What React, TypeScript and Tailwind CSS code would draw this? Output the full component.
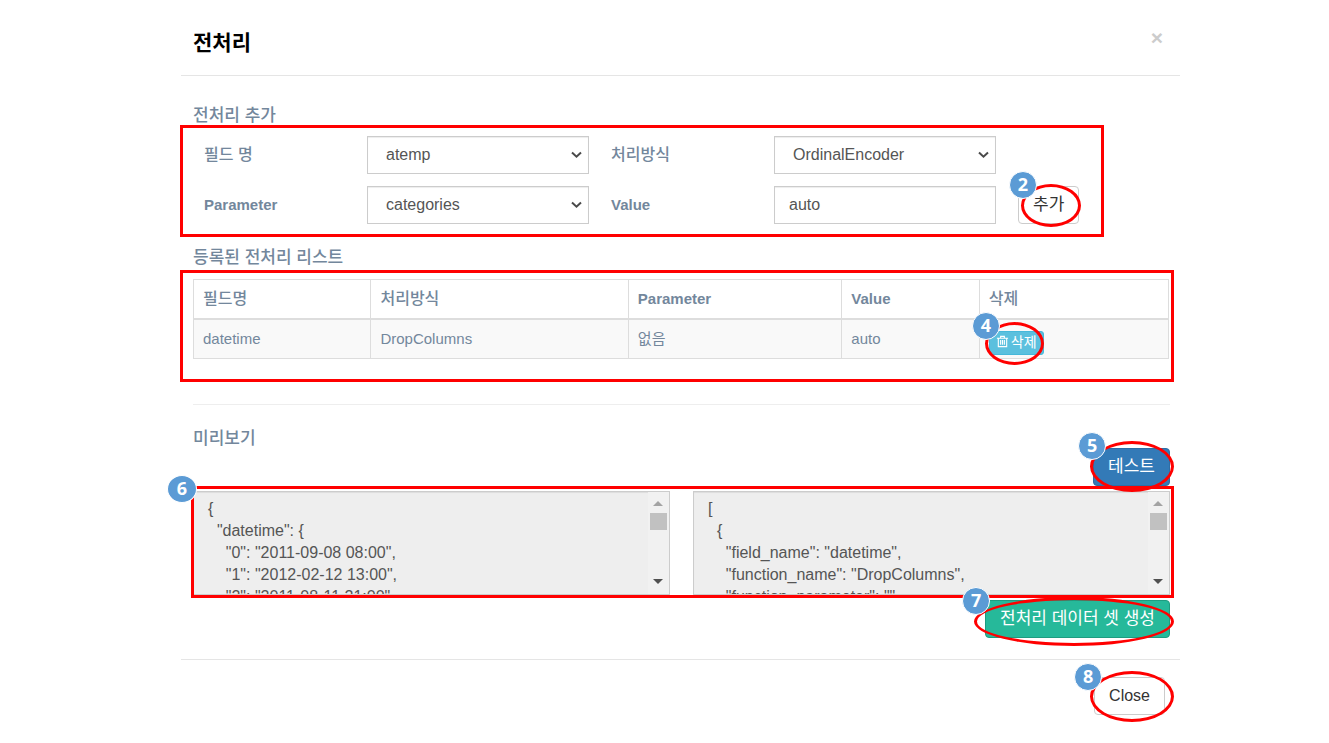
import type { ReactNode } from "react";
import { useState } from "react";

const PREVIEW = `{
  "datetime": {
    "0": "2011-09-08 08:00",
    "1": "2012-02-12 13:00",
    "2": "2011-08-11 21:00",`;

const FUNCTIONS = `[
  {
    "field_name": "datetime",
    "function_name": "DropColumns",
    "function_parameter": "",`;

function Badge({ n, className }: { n: number; className: string }) {
  return (
    <span
      className={`pointer-events-none absolute z-20 flex h-7 items-center justify-center rounded-[50%] border border-white bg-[#5b9bd5] pb-0.5 font-['Noto_Sans','Open_Sans',sans-serif] text-lg font-bold leading-none text-white ${className}`}
    >
      {n}
    </span>
  );
}

function Ring({ className }: { className: string }) {
  return <span className={`pointer-events-none absolute z-10 rounded-[50%] border-3 border-[#ff0000] ${className}`} />;
}

function Frame({ className }: { className: string }) {
  return <div className={`pointer-events-none absolute border-3 border-[#ff0000] ${className}`} />;
}

function Select({ id, value, options }: { id: string; value: string; options: string[] }) {
  return (
    <div className="relative">
      <select
        id={id}
        defaultValue={value}
        className="h-[38px] w-full appearance-none border border-[#ccc] bg-white pl-[18px] pr-8 text-base text-[#555] shadow-[inset_0_1px_1px_rgba(0,0,0,0.075)]"
      >
        {options.map((o) => (
          <option key={o}>{o}</option>
        ))}
      </select>
      <svg className="pointer-events-none absolute right-[7px] top-[15px]" width="11" height="8" viewBox="0 0 11 8" fill="none">
        <path d="M1 1.5 5.5 5.700 10 1.5" stroke="#4a4a4a" strokeWidth="2" />
      </svg>
    </div>
  );
}

function Ko({ children }: { children: ReactNode }) {
  return <span className="text-base font-medium leading-5">{children}</span>;
}

function Label({ htmlFor, children }: { htmlFor: string; children: ReactNode }) {
  return (
    <label htmlFor={htmlFor} className="self-center pl-[22px] font-bold">
      {children}
    </label>
  );
}

function Heading({ children }: { children: ReactNode }) {
  return <h2 className="text-[17px] font-medium leading-6">{children}</h2>;
}

function CodeBox({ label, value }: { label: string; value: string }) {
  return (
    <div className="flex h-[104px] border border-[#ccc] bg-[#eee] shadow-[inset_0_1px_1px_rgba(0,0,0,0.075)]">
      <textarea
        aria-label={label}
        readOnly
        wrap="off"
        value={value}
        className="min-w-0 flex-1 resize-none overflow-hidden bg-transparent pl-[14px] pt-1.5 text-base leading-[22px] text-[#555] outline-none"
      />
      <svg className="h-full w-[21px] bg-[#f1f1f1]" viewBox="0 0 21 102" fill="none">
        <path d="M5 14h10l-5-5z" fill="#a3a3a3" />
        <path d="M2 21h17v17H2z" fill="#c1c1c1" />
        <path d="M5 87h10l-5 5z" fill="#505050" />
      </svg>
    </div>
  );
}

const COLUMNS = [
  { name: <Ko>필드명</Ko>, width: "w-[18.2%]" },
  { name: <Ko>처리방식</Ko>, width: "w-[26.4%]" },
  { name: "Parameter", width: "w-[21.9%]" },
  { name: "Value", width: "w-[14.1%]" },
  { name: <Ko>삭제</Ko>, width: "w-[19.4%]" },
];

export default function App() {
  const [value, setValue] = useState("auto");
  return (
    <div className="min-h-screen bg-white pl-8 font-['Liberation_Sans','Noto_Sans_CJK_KR',sans-serif] text-[15px] text-[#73879c]">
      <main className="mx-auto w-full max-w-[999px]">
        <header className="flex h-[76px] items-start justify-between border-b border-[#e5e5e5] px-3 pt-7">
          <h1 className="text-[21px] font-bold leading-[30px] text-black">전처리</h1>
          <button aria-label="닫기" className="mr-[5px] text-[21px] font-bold leading-5 text-[#ccc]">
            ×
          </button>
        </header>

        <div className="pl-3 pr-[10px] pt-7">
          <Heading>전처리 추가</Heading>
          <form className="relative -ml-[11px] mt-2 grid grid-cols-[185px_minmax(0,222px)_185px_minmax(0,222px)_auto] justify-start gap-y-3">
            <Frame className="-bottom-[13px] -left-[2px] -top-[11px] w-[924px]" />
            <Label htmlFor="field">
              <Ko>필드 명</Ko>
            </Label>
            <Select id="field" value="atemp" options={["atemp", "datetime"]} />
            <Label htmlFor="method">
              <Ko>처리방식</Ko>
            </Label>
            <Select id="method" value="OrdinalEncoder" options={["OrdinalEncoder", "DropColumns"]} />
            <span />
            <Label htmlFor="param">Parameter</Label>
            <Select id="param" value="categories" options={["categories"]} />
            <Label htmlFor="value">Value</Label>
            <input
              id="value"
              value={value}
              onChange={(e) => setValue(e.target.value)}
              className="h-[38px] w-full border border-[#ccc] bg-white px-[14px] text-base text-[#555] shadow-[inset_0_1px_1px_rgba(0,0,0,0.075)]"
            />
            <div className="relative ml-[22px]">
              <button type="button" className="h-[38px] rounded border border-[#ccc] bg-white px-[14px] text-[17px] text-[#333]">
                추가
              </button>
              <Ring className="-top-[2px] left-[3px] h-[43px] w-[60px]" />
              <Badge n={2} className="-left-[9px] -top-[15px] w-7" />
            </div>
          </form>

          <div className="mt-[22px]">
            <Heading>등록된 전처리 리스트</Heading>
          </div>
          <div className="relative mt-[9px] pr-px">
            <Frame className="-bottom-[23px] -left-[13px] -right-[4px] -top-[9px]" />
            <table className="w-full table-fixed border-collapse border border-[#ddd]">
              <thead>
                <tr className="h-[39px]">
                  {COLUMNS.map((c, i) => (
                    <th key={i} className={`border border-b-2 border-[#ddd] px-[9px] text-left font-bold ${c.width}`}>
                      {c.name}
                    </th>
                  ))}
                </tr>
              </thead>
              <tbody>
                <tr className="h-10 bg-[#f9f9f9]">
                  <td className="border border-[#ddd] px-[9px]">datetime</td>
                  <td className="border border-[#ddd] px-[9px]">DropColumns</td>
                  <td className="border border-[#ddd] px-[9px]">없음</td>
                  <td className="border border-[#ddd] px-[9px]">auto</td>
                  <td className="border border-[#ddd] px-[9px] pb-0 pt-2">
                    <div className="relative w-fit">
                      <button className="flex h-6 items-center gap-0.5 rounded-[3px] border border-[#46b8da] bg-[#5bc0de] px-[6px] pb-0.5 text-sm text-white">
                        <svg width="13" height="13" viewBox="0 0 14 14" fill="none" stroke="currentColor" strokeWidth="1.200">
                          <path d="M1 3.500h12M5 3.300V1.500h4v1.800M2.500 3.500v9h9v-9M5 5.500v5M7 5.500v5M9 5.500v5" />
                        </svg>
                        삭제
                      </button>
                      <Ring className="-left-[4px] -top-[9px] h-[43px] w-[59px]" />
                      <Badge n={4} className="-left-[17px] -top-[19px] w-7" />
                    </div>
                  </td>
                </tr>
              </tbody>
            </table>
          </div>

          <hr className="mt-[45px] border-[#eee]" />

          <div className="mt-[22px] flex items-start justify-between">
            <Heading>미리보기</Heading>
            <div className="relative mt-[21px]">
              <button className="h-[38px] rounded border border-[#2e6da4] bg-[#337ab7] px-[14px] text-[17px] text-white">테스트</button>
              <Ring className="-right-[4px] -top-[7px] h-[51px] w-[84px]" />
              <Badge n={5} className="-left-[15px] -top-4 w-7" />
            </div>
          </div>

          <div className="relative mt-[5px] grid grid-cols-2 gap-x-[23px]">
            <Frame className="-bottom-[3px] -left-[2px] -right-[4px] -top-[5px]" />
            <CodeBox label="데이터 미리보기" value={PREVIEW} />
            <CodeBox label="전처리 함수" value={FUNCTIONS} />
            <Badge n={6} className="-left-[26px] -top-4 w-[30px]" />
          </div>

          <div className="relative ml-auto mt-[5px] w-fit">
            <button className="h-[38px] rounded border border-[#1e9c80] bg-[#26b99a] px-[14px] text-[17px] text-white">전처리 데이터 셋 생성</button>
            <Ring className="-left-[11px] -right-[4px] -top-[3px] h-[49px]" />
            <Badge n={7} className="-left-[23px] -top-[13px] w-7" />
          </div>
        </div>

        <footer className="mt-[21px] flex justify-end border-t border-[#e5e5e5] pb-7 pr-[15px] pt-[17px]">
          <div className="relative">
            <button className="h-[38px] rounded border border-[#ccc] bg-white px-[14px] text-base text-[#333]">Close</button>
            <Ring className="-left-[4px] -top-[6px] h-[51px] w-[84px]" />
            <Badge n={8} className="-left-[20px] -top-[14px] w-7" />
          </div>
        </footer>
      </main>
    </div>
  );
}
